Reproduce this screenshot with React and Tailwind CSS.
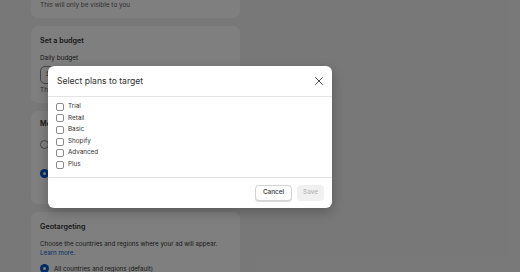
import React from 'react';

const plans = ['Trial', 'Retail', 'Basic', 'Shopify', 'Advanced', 'Plus'];

const Card = ({ className = '', children }) => (
  <div className={`bg-white rounded-[7px] px-[9px] ${className}`}>{children}</div>
);

const Radio = ({ checked }) =>
  checked ? (
    <span className="w-[9px] h-[9px] rounded-full bg-[#005bd3] flex items-center justify-center shrink-0">
      <span className="w-[3px] h-[3px] rounded-full bg-white" />
    </span>
  ) : (
    <span className="w-[9px] h-[9px] rounded-full border border-[#8a8a8a] bg-white shrink-0" />
  );

const App = () => {
  return (
    <div
      className="relative w-[520px] h-[272px] overflow-hidden bg-[#f1f1f1] text-[#303030]"
      style={{ fontFamily: 'Inter, "Noto Sans", sans-serif' }}
    >
      {/* Page behind the modal */}
      <div className="w-[209px] ml-[31px] flex flex-col gap-[8px] mt-[-30px]">
        <Card className="h-[48px] flex flex-col justify-end pb-[8px]">
          <p className="text-[6.4px] leading-[9px] text-[#616161]">This will only be visible to you</p>
        </Card>

        <Card className="pt-[10px] pb-[8px]">
          <h3 className="text-[7.2px] leading-[10px] font-semibold">Set a budget</h3>
          <p className="mt-[7px] text-[6.4px] leading-[10px]">Daily budget</p>
          <div className="mt-[3px] h-[18px] rounded-[5px] border border-[#8a8a8a] flex items-center px-[5px] text-[6.4px]">
            $
          </div>
          <p className="mt-[1px] text-[6.4px] leading-[10px] text-[#616161]">This is the most you'll spend</p>
        </Card>

        <Card className="h-[93px] pt-[8px]">
          <h3 className="text-[7.2px] leading-[10px] font-semibold">Message</h3>
          <div className="mt-[10px] h-[10px] flex items-center">
            <Radio />
          </div>
          <div className="mt-[19px] h-[10px] flex items-center">
            <Radio checked />
          </div>
        </Card>

        <Card className="h-[80px] pt-[10px]">
          <h3 className="text-[7.2px] leading-[10px] font-semibold">Geotargeting</h3>
          <p className="mt-[7px] text-[6.2px] leading-[9px]">
            Choose the countries and regions where your ad will appear.
            <br />
            <span className="text-[#005bd3]">Learn more.</span>
          </p>
          <div className="mt-[7px] h-[9px] flex items-center gap-[5px] text-[6.2px]">
            <Radio checked />
            <span>All countries and regions (default)</span>
          </div>
        </Card>
      </div>

      {/* Backdrop */}
      <div className="absolute inset-0 bg-black/50" />

      {/* Modal */}
      <div className="absolute left-[48px] top-[66px] w-[284px] h-[142px] bg-white rounded-[6px] shadow-[0_4px_12px_rgba(0,0,0,0.25)] flex flex-col">
        <div className="h-[31px] flex items-center justify-between pl-[9px] pr-[9px] border-b border-[#e3e3e3]">
          <h2 className="text-[8.6px] text-[#303030]">Select plans to target</h2>
          <svg width="8" height="8" viewBox="0 0 8 8" fill="none" stroke="#4a4a4a" strokeWidth="1" strokeLinecap="round">
            <path d="M0.5 0.5L7.5 7.5M7.5 0.5L0.5 7.5" />
          </svg>
        </div>
        <div className="flex-1 pt-[4px] px-[8px] flex flex-col">
          {plans.map((p) => (
            <label key={p} className="h-[11.6px] flex items-center gap-[4px] text-[6.3px] text-[#303030]">
              <span className="w-[8px] h-[8px] rounded-[2px] border border-[#8a8a8a] bg-white shrink-0" />
              {p}
            </label>
          ))}
        </div>
        <div className="h-[31px] border-t border-[#e3e3e3] flex items-center justify-end gap-[5px] pr-[8px]">
          <button className="w-[37px] h-[16px] rounded-[4px] bg-white border border-[#d4d4d4] shadow-[0_1px_0_rgba(0,0,0,0.15)] text-[6.4px] font-medium text-[#303030]">
            Cancel
          </button>
          <button className="w-[27px] h-[16px] rounded-[4px] bg-[#f0f0f0] text-[6.4px] font-medium text-[#b5b5b5]">
            Save
          </button>
        </div>
      </div>
    </div>
  );
};

export default App;
